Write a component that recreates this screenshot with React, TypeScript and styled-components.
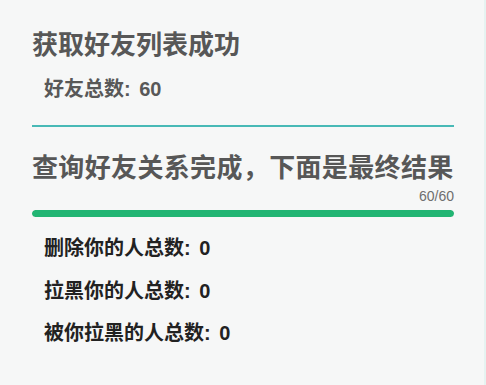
import React from 'react';
import styled, { createGlobalStyle } from 'styled-components';

const GlobalStyle = createGlobalStyle`
  html, body {
    margin: 0;
    padding: 0;
    background: #f6f7f7;
    font-family: "Liberation Sans", "Noto Sans CJK SC", sans-serif;
  }
`;

const Page = styled.div`
  box-sizing: border-box;
  width: 486px;
  height: 385px;
  padding: 28px 32px 0 32px;
  border-right: 2px solid #e6f3f1;
`;

const Panel = styled.div`
  width: 422px;
  display: flex;
  flex-direction: column;
`;

const Heading = styled.h2<{ $wide?: boolean }>`
  margin: 0;
  font-size: 26px;
  line-height: 34px;
  font-weight: 700;
  color: #575757;
  white-space: nowrap;
  letter-spacing: ${(p) => (p.$wide ? '0.35px' : '0')};
`;

const Count = styled.div<{ $dark?: boolean }>`
  padding-left: 12px;
  font-size: 20px;
  line-height: 26px;
  font-weight: 700;
  word-spacing: 3px;
  color: ${(p) => (p.$dark ? '#222' : '#585858')};
`;

const FriendCount = styled(Count)`
  margin-top: 14px;
`;

const Divider = styled.hr`
  margin: 23px 0 24px;
  border: none;
  height: 2px;
  background: #48b9b6;
`;

const ProgressLabel = styled.div`
  text-align: right;
  font-size: 14px;
  color: #6e6e6e;
  margin-top: 3px;
`;

const Track = styled.div`
  height: 7px;
  border-radius: 4px;
  background: #e4e4e4;
  margin-top: 6px;
  overflow: hidden;
`;

const Fill = styled.div`
  height: 100%;
  border-radius: 4px;
  background: #22b573;
`;

const Stats = styled.div`
  display: flex;
  flex-direction: column;
  gap: 16.5px;
  margin-top: 18px;
`;

export default function App() {
  const done = 60;
  const total = 60;
  const stats = [
    { label: '删除你的人总数', value: 0 },
    { label: '拉黑你的人总数', value: 0 },
    { label: '被你拉黑的人总数', value: 0 },
  ];

  return (
    <>
      <GlobalStyle />
      <Page>
        <Panel>
          <Heading>获取好友列表成功</Heading>
          <FriendCount>好友总数: 60</FriendCount>
          <Divider />
          <Heading $wide>查询好友关系完成，下面是最终结果</Heading>
          <ProgressLabel>
            {done}/{total}
          </ProgressLabel>
          <Track>
            <Fill style={{ width: `${(done / total) * 100}%` }} />
          </Track>
          <Stats>
            {stats.map((s) => (
              <Count $dark key={s.label}>
                {s.label}: {s.value}
              </Count>
            ))}
          </Stats>
        </Panel>
      </Page>
    </>
  );
}
